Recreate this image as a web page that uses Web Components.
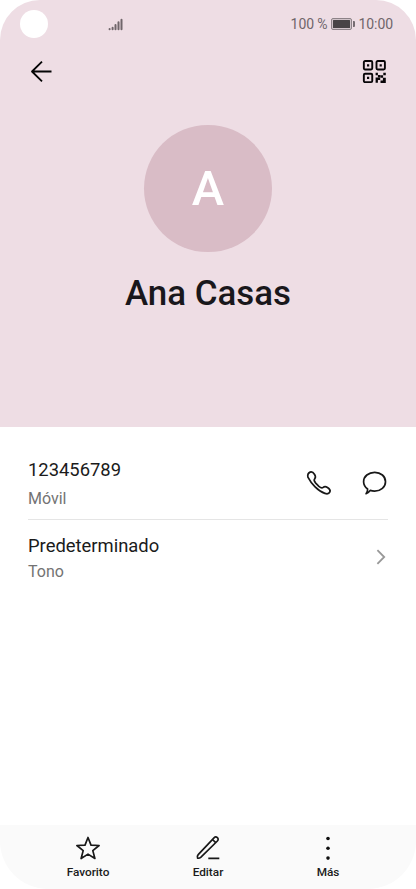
<!DOCTYPE html>
<html lang="es">
<head>
<meta charset="utf-8">
<title>Contacto</title>
<style>
html,body{margin:0;height:100%;background:#fff;font-family:Roboto,sans-serif}
</style>
</head>
<body>
<contact-screen></contact-screen>
<script>
const icons = {
  signal: '<g stroke="#70666b" stroke-width="2" stroke-linecap="round"><path d="M1.6 12v.2M4.6 10.700v1.500M7.500 7.900v4.300M10.500 5.300v6.900M13.500 2.700v9.500"/></g>',
  back: '<path d="M21.500 11.500H2M12 1.700L2 11.500l10 9.800" stroke="#050505" stroke-width="1.800" stroke-linejoin="round"/>',
  qr: '<g transform="translate(.4 -.4)"><g stroke="#080608" stroke-width="1.900"><rect x="1.450" y="1.450" width="8.400" height="8.400" rx="1.200"/><rect x="14.100" y="1.450" width="8.400" height="8.400" rx="1.200"/><rect x="1.450" y="14.100" width="8.400" height="8.400" rx="1.200"/></g><path fill="#080608" d="M4.600 4.600h2.200v2.200H4.600zM17.200 4.600h2.200v2.200h-2.200zM4.600 17.200h2.200v2.200H4.600zM15.500 15.500h2.500v2.500h-2.500zM13.200 13.200h2.300v2.500h-2.300zM20.900 13.200h2.500v2.500h-2.500zM18.200 15.700h2.500v2.500h-2.500zM13.200 18h2.300v5.200h-2.300zM15.500 18.200h2.300v2.200h-2.300zM20.500 18.200h2.900v5.200h-5.300V21h2.400z"/></g>',
  phone: '<path d="M3.100 1.100C5.200.2 6.200 1.200 7.600 3.500c1.100 1.800 1.400 2.800.1 4.300-1.200 1.400-.7 2.400 1 4.300l3.200 3.200c1.900 1.700 2.900 2.200 4.300 1 1.500-1.300 2.500-1 4.300.1 2.300 1.400 3.300 2.400 2.400 4.500-.8 1.800-2.500 2.300-5 1.500C14.600 21.400 10.900 18.700 8.100 15.900S2.600 9.400.9 6.100C.4 3.600 1.300 1.900 3.100 1.100z" stroke="#181818" stroke-width="1.700" stroke-linejoin="round"/>',
  chat: '<path d="M12.100 1.300c6.100 0 10.800 4.100 10.800 9.400s-4.700 9.400-10.800 9.400c-1.700 0-3.100-.2-4.500-.7-1.200 1.900-2.400 2.900-4.100 3.300 1.200-1.500 1.700-2.900 1.500-4.700C2.500 16.100 1 13.600 1 10.700c0-5.300 5-9.400 11.100-9.400z" stroke="#181818" stroke-width="1.700" stroke-linejoin="round" transform="translate(-.4 0)"/>',
  chevron: '<path d="M1.400 1.200L8.200 8l-6.800 6.800" stroke="#989898" stroke-width="1.800"/>',
  star: '<path d="M12 1.500l3 7.600 8.100.4-6.300 5.100 2.100 7.900-6.900-4.400-6.900 4.400 2.100-7.900L.9 9.500 9 9.100z" stroke="#181818" stroke-width="1.700" stroke-linejoin="round"/>',
  edit: '<g stroke="#181818" stroke-width="1.700" stroke-linecap="round" stroke-linejoin="round"><path d="M18 1.800c1-1 2.400-1 3.400-.1s1 2.300 0 3.300L4.700 21.300c-1 .9-2.100 1.100-3.100.8-.5-1.200-.3-2.500.6-3.500zM16.500 3.500l3.200 3.200"/><path d="M12.300 22.300h11" stroke-linecap="butt"/></g>',
  more: '<g fill="#111"><circle cx="12" cy="2.500" r="1.800"/><circle cx="12" cy="12.300" r="1.800"/><circle cx="12" cy="22.100" r="1.800"/></g>'
};
function define(name, markup) {
  customElements.define(name, class extends HTMLElement {
    connectedCallback() {
      if (this.shadowRoot) return;
      this.attachShadow({mode:'open'}).innerHTML = typeof markup === 'function' ? markup(this) : markup;
    }
  });
}
define('ui-icon', el => {
  const w = el.getAttribute('w') || 24, h = el.getAttribute('h') || 24;
  return `<style>:host{display:block;flex:none;width:${w}px;height:${h}px}svg{display:block;overflow:visible}</style><svg width="${w}" height="${h}" viewBox="0 0 ${w} ${h}" fill="none">${icons[el.getAttribute('name')]}</svg>`;
});
define('battery-level', `<style>:host{display:flex;align-items:center;margin:0 4px 0 3px}
.cell{box-sizing:border-box;width:21px;height:12px;border:1px solid #8d8388;border-radius:2px;padding:1px;background:#d0c3c9}
.fill{height:8px;background:#484446;border-radius:.5px}.tip{width:2px;height:6px;background:#766d72;margin-left:1px;border-radius:0 1px 1px 0}</style>
<div class="cell"><div class="fill"></div></div><div class="tip"></div>`);
define('status-bar', `<style>:host{display:flex;align-items:center;height:48px;box-sizing:border-box;padding:0 23px 0 20px;font-size:14px;color:#70666b}
.camera{width:28px;height:28px;border-radius:50%;background:#fff;margin-right:60px}.status{display:flex;align-items:center;margin-left:auto;letter-spacing:-.08px}</style>
<div class="camera"></div><ui-icon name="signal" w="15" h="14"></ui-icon><div class="status"><span>100 %</span><battery-level></battery-level><span>10:00</span></div>`);
define('contact-header', `<style>:host{display:block;height:427px;background:#eedde4}
nav{display:flex;justify-content:space-between;height:47px;align-items:center;padding:0 30px 0 30px}
.profile{display:flex;flex-direction:column;align-items:center;padding-top:29.500px}
.avatar{width:127.500px;height:127.500px;border-radius:50%;background:#d9bcc6;color:#fff;display:flex;align-items:center;justify-content:center;font-size:48.800px;font-weight:500;box-sizing:border-box;padding-top:1px}
h1{font-size:34.900px;line-height:42px;font-weight:500;margin:21px 0 0;color:#19171b}</style>
<status-bar></status-bar><nav><ui-icon name="back"></ui-icon><ui-icon name="qr"></ui-icon></nav>
<div class="profile"><div class="avatar">A</div><h1><slot></slot></h1></div>`);
define('detail-row', `<style>:host{display:flex;align-items:center;justify-content:space-between;box-sizing:border-box;margin:0 28px}
.main{font-size:18.400px;line-height:24px;color:#1b1b1b}.sub{font-size:16px;line-height:20px;margin-top:var(--sub-gap,7px);color:#737373}</style>
<div><div class="main"><slot></slot></div><div class="sub"><slot name="sub"></slot></div></div><slot name="actions"></slot>`);
define('tab-action', el => `<style>:host{display:flex;flex-direction:column;align-items:center;width:120px;font-size:11.800px;line-height:14px;font-weight:500;color:#1b1b1b}span{margin-top:5px}</style><ui-icon name="${el.getAttribute('icon')}"></ui-icon><span><slot></slot></span>`);
define('bottom-bar', `<style>:host{display:flex;justify-content:center;margin-top:auto;height:64px;box-sizing:border-box;padding-top:11px;background:#fafafa}</style><slot></slot>`);
define('contact-screen', `<style>:host{display:flex;flex-direction:column;width:416px;height:889px;overflow:hidden;background:#fff;border-radius:40px 40px 48px 48px}
.number{height:93px;align-items:flex-start;border-bottom:1px solid #e5e5e5;padding-top:31px}
.actions{display:flex;gap:31.500px;padding-top:12.500px;margin-right:1.500px}
.tone{padding-top:14px;--sub-gap:4px}.next{margin:-3px 2px 0 0}</style>
<contact-header>Ana Casas</contact-header>
<detail-row class="number">123456789<span slot="sub">Móvil</span><div class="actions" slot="actions"><ui-icon name="phone"></ui-icon><ui-icon name="chat"></ui-icon></div></detail-row>
<detail-row class="tone">Predeterminado<span slot="sub">Tono</span><ui-icon class="next" slot="actions" name="chevron" w="10" h="16"></ui-icon></detail-row>
<bottom-bar><tab-action icon="star">Favorito</tab-action><tab-action icon="edit">Editar</tab-action><tab-action icon="more">Más</tab-action></bottom-bar>`);
</script>
</body>
</html>
